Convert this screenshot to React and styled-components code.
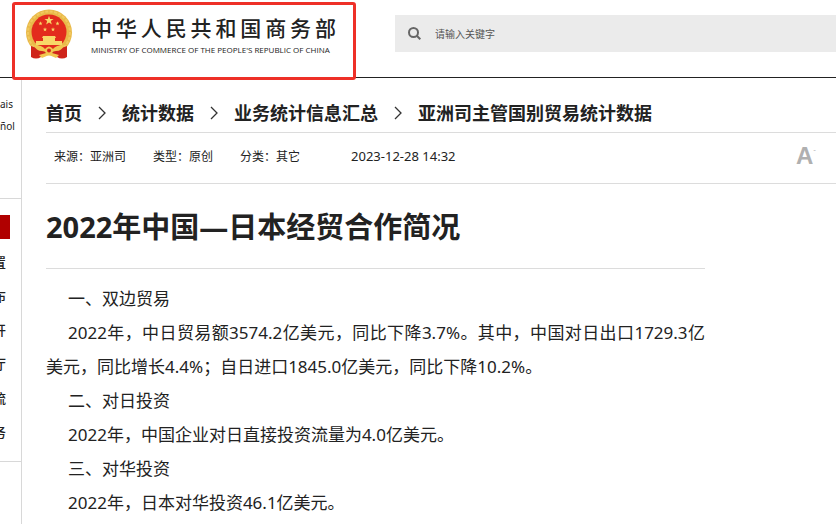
import React from "react";
import styled, { createGlobalStyle } from "styled-components";

const Global = createGlobalStyle`
  *, *::before, *::after { box-sizing: border-box; }
  body {
    margin: 0;
    background: #fff;
    color: #222;
    font-family: "Noto Sans", "Noto Sans CJK SC", sans-serif;
    overflow-x: hidden;
  }
  h1, p, ol, ul { margin: 0; padding: 0; }
  ol, ul { list-style: none; }
  a { color: inherit; text-decoration: none; }
`;

const Page = styled.div`
  display: flex;
  flex-direction: column;
  min-height: 100vh;
`;

const Header = styled.header`
  display: flex;
  align-items: flex-start;
  gap: 39px;
  height: 78px;
  padding-left: 12px;
  border-bottom: 1px solid #222;
`;

const Brand = styled.a`
  position: relative;
  display: flex;
  gap: 18px;
  flex: none;
  width: 344px;
  padding: 9px 20px 0 13px;

  &::after {
    content: "";
    position: absolute;
    inset: 2px 0 auto 0;
    height: 78px;
    border: 3px solid #ee3028;
    border-radius: 3px;
  }
`;

const EmblemDrawing = styled.svg`
  flex: none;
  width: 48px;
  height: 51px;
`;

const BrandText = styled.span`
  display: flex;
  flex-direction: column;
  flex: 1;
  min-width: 0;
  padding-top: 4px;
`;

const BrandName = styled.span`
  font: 500 21px/28px "Noto Sans CJK SC", sans-serif;
  text-align: justify;
  text-align-last: justify;
`;

const BrandEnglish = styled.span`
  font: 8px/18px "Open Sans", sans-serif;
  white-space: nowrap;
`;

const Search = styled.label`
  display: flex;
  align-items: center;
  gap: 14px;
  flex: 1;
  height: 37px;
  margin-top: 15px;
  padding-left: 13px;
  background: #ebebeb;
  color: #666;
`;

const SearchInput = styled.input`
  flex: 1;
  min-width: 0;
  padding: 0;
  border: 0;
  outline: 0;
  background: transparent;
  font: 10px/20px "Noto Sans CJK SC", sans-serif;
  color: #444;
  &::placeholder { color: #555; opacity: 1; }
`;

const Body = styled.div`
  display: flex;
  flex: 1;
`;

const Sidebar = styled.aside`
  flex: none;
  width: 22px;
  border-right: 1px solid #d8d8d8;
  overflow: hidden;
`;

const Languages = styled.ul`
  height: 121px;
  padding-top: 15px;
  border-bottom: 1px solid #d8d8d8;
  font-size: 10px;
  line-height: 22px;
`;

const Menu = styled.nav`
  padding: 16px 0 12px;
  border-bottom: 1px solid #d8d8d8;
`;

const MenuMarker = styled.div`
  width: 10px;
  height: 24px;
  margin-bottom: 6px;
  background: #b00000;
`;

const MenuLink = styled.a`
  display: flex;
  justify-content: flex-end;
  width: 6px;
  font-size: 13px;
  font-weight: 500;
  line-height: 34px;
`;

const Main = styled.main`
  flex: 1;
  min-width: 0;
  padding-left: 24px;
`;

const Breadcrumb = styled.ol`
  display: flex;
  align-items: center;
  height: 55px;
  padding-top: 16px;
  border-bottom: 1px solid #dcdcdc;
  font-size: 18px;
  font-weight: 700;
  line-height: 26px;
  white-space: nowrap;
`;

const Crumb = styled.li`
  display: flex;
  align-items: center;
`;

const Chevron = styled.svg`
  width: 8px;
  height: 14px;
  margin: 0 16px;
`;

const MetaBar = styled.div`
  display: flex;
  align-items: center;
  height: 51px;
  padding: 0 20px 4px 8px;
  border-bottom: 1px solid #dcdcdc;
  font-size: 12px;
  white-space: nowrap;
`;

const Meta = styled.span`
  margin-right: 27px;
`;

const Published = styled.time`
  margin-left: 24px;
  font-size: 13px;
`;

const SizeButton = styled.button`
  display: flex;
  align-items: flex-start;
  margin-left: auto;
  padding: 0;
  border: 0;
  background: none;
  font: 700 24px/28px "Liberation Sans", sans-serif;
  color: #b0b0b0;
`;

const SizeMark = styled.sup`
  font-size: 8px;
  line-height: 16px;
  font-weight: 400;
`;

const Article = styled.article`
  max-width: 659px;
`;

const Title = styled.h1`
  height: 85px;
  padding-top: 20px;
  border-bottom: 1px solid #dcdcdc;
  font-size: 29px;
  font-weight: 700;
  line-height: 46px;
`;

const Content = styled.div`
  padding-top: 13px;
  font-size: 17px;
  line-height: 34px;
`;

const Paragraph = styled.p`
  text-indent: 22px;
  text-align: justify;
`;

const star = (cx, cy, r) =>
  Array.from({ length: 10 }, (_, i) => {
    const a = (Math.PI / 5) * i - Math.PI / 2;
    const d = i % 2 ? r * 0.4 : r;
    return `${(cx + d * Math.cos(a)).toFixed(2)},${(cy + d * Math.sin(a)).toFixed(2)}`;
  }).join(" ");

const Emblem = () => (
  <EmblemDrawing viewBox="0 0 48 51" aria-hidden="true">
    <circle cx="24" cy="23.5" r="23" fill="#e9b949" />
    <circle cx="24" cy="23.5" r="21" fill="none" stroke="#f1c95f" strokeWidth="2" strokeDasharray="3 1.5" />
    <circle cx="24" cy="23" r="17.5" fill="#e32b1d" />
    <path d="M6 37 L6 48 Q11 51 16 48 L24 45 L32 48 Q37 51 42 48 L42 37 L34 40 H14 Z" fill="#cf241b" />
    <g fill="#f8d768">
      <polygon points={star(24, 11.5, 4.8)} />
      <polygon points={star(15.5, 14.5, 2.2)} />
      <polygon points={star(32.5, 14.5, 2.2)} />
      <polygon points={star(20, 20.5, 2.2)} />
      <polygon points={star(28, 20.5, 2.2)} />
      <path d="M18 27 H30 L31 29 H17 Z M18 28 H30 V32 H18 Z M11 32 H37 V36 H11 Z" />
    </g>
    <path d="M9 36 Q17 36 20 40 Q24 35 28 40 Q31 36 39 36 Q37 42 31 42 Q28 42 27 44 L34 46 L31 49 L24 46 L17 49 L14 46 L21 44 Q20 42 17 42 Q11 42 9 36 Z" fill="#f2c650" />
    <circle cx="24" cy="41.5" r="2" fill="#d8251c" />
  </EmblemDrawing>
);

const languages = ["ais", "ñol"];
const menu = ["置", "布", "开", "厅", "流", "务"];
const crumbs = ["首页", "统计数据", "业务统计信息汇总", "亚洲司主管国别贸易统计数据"];
const meta = ["来源：亚洲司", "类型：原创", "分类：其它"];
const paragraphs = [
  "一、双边贸易",
  "2022年，中日贸易额3574.2亿美元，同比下降3.7%。其中，中国对日出口1729.3亿美元，同比增长4.4%；自日进口1845.0亿美元，同比下降10.2%。",
  "二、对日投资",
  "2022年，中国企业对日直接投资流量为4.0亿美元。",
  "三、对华投资",
  "2022年，日本对华投资46.1亿美元。",
];

export default function App() {
  return (
    <Page lang="zh-CN">
      <Global />
      <Header>
        <Brand href="#">
          <Emblem />
          <BrandText>
            <BrandName>中华人民共和国商务部</BrandName>
            <BrandEnglish>MINISTRY OF COMMERCE OF THE PEOPLE'S REPUBLIC OF CHINA</BrandEnglish>
          </BrandText>
        </Brand>
        <Search>
          <svg width="13" height="13" viewBox="0 0 13 13" fill="none" stroke="currentColor" strokeWidth="2" aria-hidden="true">
            <circle cx="5.5" cy="5.5" r="4.5" />
            <path d="M8.8 8.8 L12.3 12.3" />
          </svg>
          <SearchInput type="text" placeholder="请输入关键字" aria-label="请输入关键字" />
        </Search>
      </Header>
      <Body>
        <Sidebar>
          <Languages>
            {languages.map((l) => (
              <li key={l}><a href="#">{l}</a></li>
            ))}
          </Languages>
          <Menu>
            <MenuMarker />
            {menu.map((m) => (
              <MenuLink href="#" key={m}>{m}</MenuLink>
            ))}
          </Menu>
        </Sidebar>
        <Main>
          <Breadcrumb>
            {crumbs.map((c, i) => (
              <Crumb key={c}>
                {i > 0 && (
                  <Chevron viewBox="0 0 8 14" fill="none" stroke="#333" strokeWidth="1.3" aria-hidden="true">
                    <path d="M1 1 L7 7 L1 13" />
                  </Chevron>
                )}
                <a href="#">{c}</a>
              </Crumb>
            ))}
          </Breadcrumb>
          <MetaBar>
            {meta.map((m) => (
              <Meta key={m}>{m}</Meta>
            ))}
            <Published>2023-12-28 14:32</Published>
            <SizeButton type="button">A<SizeMark>-</SizeMark></SizeButton>
          </MetaBar>
          <Article>
            <Title>2022年中国—日本经贸合作简况</Title>
            <Content>
              {paragraphs.map((p) => (
                <Paragraph key={p}>{p}</Paragraph>
              ))}
            </Content>
          </Article>
        </Main>
      </Body>
    </Page>
  );
}
